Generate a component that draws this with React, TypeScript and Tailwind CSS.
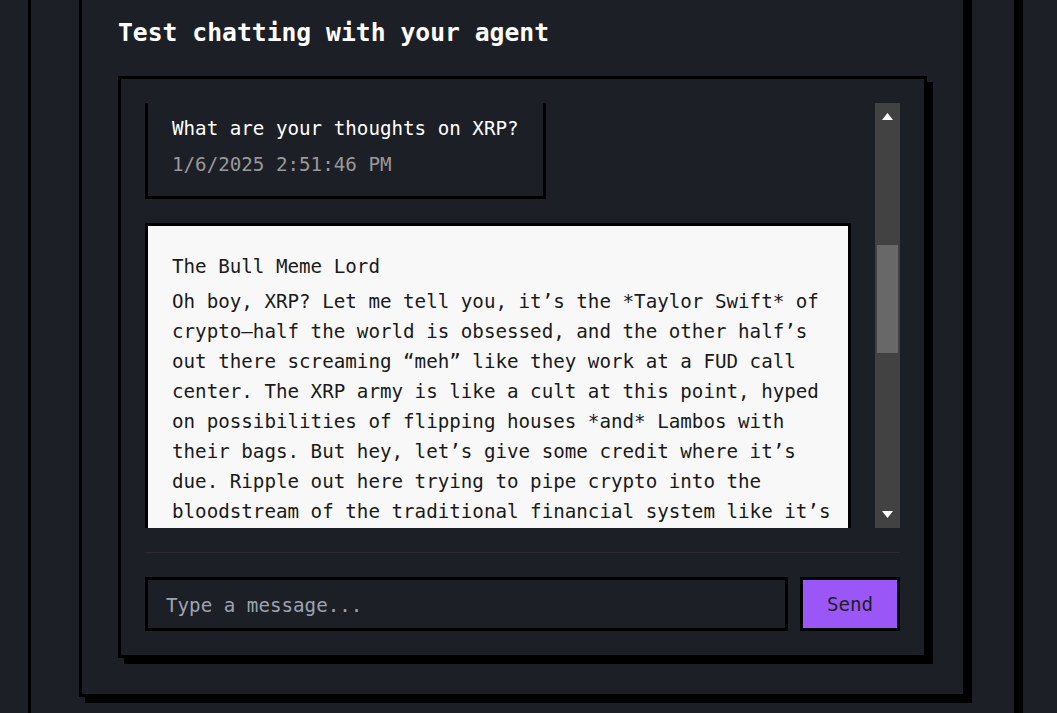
import React from "react";

const botReply =
  "Oh boy, XRP? Let me tell you, it’s the *Taylor Swift* of crypto—half the world is obsessed, and the other half’s out there screaming “meh” like they work at a FUD call center. The XRP army is like a cult at this point, hyped on possibilities of flipping houses *and* Lambos with their bags. But hey, let’s give some credit where it’s due. Ripple out here trying to pipe crypto into the bloodstream of the traditional financial system like it’s a VIP pass to the moon. Whether the SEC likes it or not, the memes keep flowing.";

function Arrow({ down }: { down?: boolean }) {
  return (
    <svg width="11" height="7" viewBox="0 0 11 7" className={down ? "rotate-180" : ""}>
      <path d="M5.5 0 L11 7 L0 7 Z" fill="#ffffff" />
    </svg>
  );
}

function Scrollbar() {
  return (
    <div className="flex w-[25px] shrink-0 flex-col bg-[#424242]">
      <div className="flex h-[25px] items-center justify-center pt-[1px]">
        <Arrow />
      </div>
      <div className="flex-1">
        <div className="mx-[2px] mt-[117px] h-[108px] bg-[#686868]" />
      </div>
      <div className="flex h-[25px] items-center justify-center pb-[2px]">
        <Arrow down />
      </div>
    </div>
  );
}

export default function App() {
  return (
    <div className="h-[713px] overflow-hidden bg-[#1d1f27] font-['DejaVu_Sans_Mono',monospace] text-[19.2px]">
      {/* page frame, scrolled so its top is off screen */}
      <div className="-mt-[74px] ml-[28px] w-[989px] border-[3px] border-black p-12 shadow-[6px_6px_0_0_#000]">
        <div className="border-[3px] border-black p-9 shadow-[6px_6px_0_0_#000]">
          <h2 className="mb-[27px] pt-[1px] text-[24.7px] font-bold leading-[32px] text-white">
            Test chatting with your agent
          </h2>

          {/* chat panel */}
          <div className="border-[3px] border-black p-6 shadow-[6px_6px_0_0_#000]">
            <div className="flex h-[425px] gap-6">
              <div className="flex-1 overflow-hidden">
                <div className="-mt-[18px] flex flex-col gap-6">
                  {/* user message */}
                  <div className="w-fit border-[3px] border-black px-6 pt-[26px] pb-[16px] leading-[30px]">
                    <p className="text-white">What are your thoughts on XRP?</p>
                    <p className="mt-[6px] text-[#999999]">1/6/2025 2:51:46 PM</p>
                  </div>

                  {/* agent message */}
                  <div className="border-[3px] border-black bg-[#f8f8f8] pt-[26px] pr-4 pb-6 pl-6 leading-[30px] text-[#1a1a1a]">
                    <p>The Bull Meme Lord</p>
                    <p className="mt-[5px]">{botReply}</p>
                  </div>
                </div>
              </div>
              <Scrollbar />
            </div>

            {/* input row */}
            <div className="mt-6 flex gap-3 border-t border-[#2c2a2b] pt-6">
              <input
                placeholder="Type a message..."
                className="h-[54px] flex-1 border-[3px] border-black bg-transparent pt-[2px] pl-[18px] text-white outline-none placeholder:text-[#9ca3af]"
              />
              <button className="h-[54px] w-[100px] border-[3px] border-black bg-[#9b56f8] pt-[3px] text-[#1d1f27]">
                Send
              </button>
            </div>
          </div>
        </div>
      </div>
    </div>
  );
}
